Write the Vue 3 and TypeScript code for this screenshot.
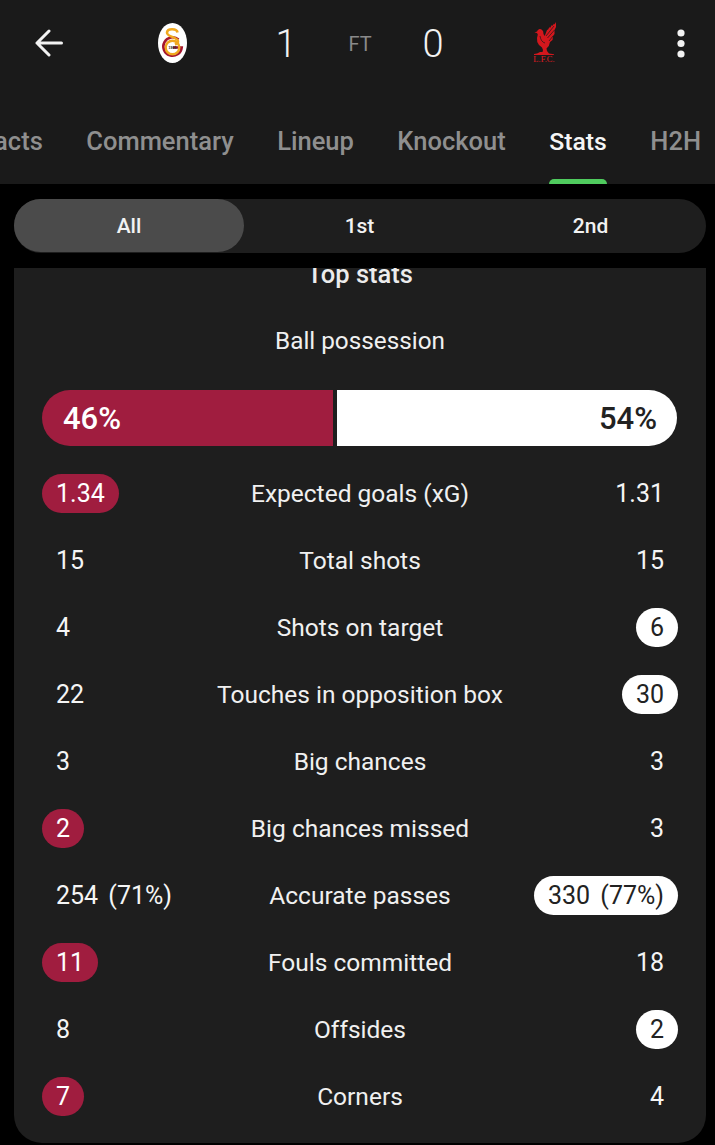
<script setup lang="ts">
interface Side { text: string; win?: boolean }
interface Row { label: string; left: Side; right: Side }

const tabs: string[] = ['Facts', 'Commentary', 'Lineup', 'Knockout', 'Stats', 'H2H']
const periods: string[] = ['All', '1st', '2nd']
const rows: Row[] = [
  { label: 'Expected goals (xG)', left: { text: '1.34', win: true }, right: { text: '1.31' } },
  { label: 'Total shots', left: { text: '15' }, right: { text: '15' } },
  { label: 'Shots on target', left: { text: '4' }, right: { text: '6', win: true } },
  { label: 'Touches in opposition box', left: { text: '22' }, right: { text: '30', win: true } },
  { label: 'Big chances', left: { text: '3' }, right: { text: '3' } },
  { label: 'Big chances missed', left: { text: '2', win: true }, right: { text: '3' } },
  { label: 'Accurate passes', left: { text: '254 (71%)' }, right: { text: '330 (77%)', win: true } },
  { label: 'Fouls committed', left: { text: '11', win: true }, right: { text: '18' } },
  { label: 'Offsides', left: { text: '8' }, right: { text: '2', win: true } },
  { label: 'Corners', left: { text: '7', win: true }, right: { text: '4' } },
]
</script>

<template>
  <div class="page">
    <header class="header">
      <div class="match">
        <svg class="back" viewBox="0 0 28 28" width="28" height="28" fill="none" stroke="#f2f2f2" stroke-width="3" stroke-linecap="round" stroke-linejoin="round">
          <path d="M2 14H26.500M14 2 2 14l12 12" />
        </svg>
        <svg class="crest" viewBox="0 0 29 40" width="29" height="40">
          <ellipse cx="14.500" cy="20" rx="14.500" ry="20" fill="#fff" />
          <path d="M20.500 16.500A9.200 9.200 0 1 0 23.700 24.500H15" fill="none" stroke="#a5172f" stroke-width="2.600" />
          <circle cx="14.500" cy="24.500" r="6.800" fill="none" stroke="#f0a81e" stroke-width="2.400" />
          <path d="M19.500 9.500C19 5.500 9.500 5 9 9.500 8.500 14 19 13.500 20 18c.5 2.500-2 3-3 3.500" fill="none" stroke="#f0a81e" stroke-width="2.600" />
          <text x="14.500" y="25.700" text-anchor="middle" class="founded">1905</text>
        </svg>
        <span class="score">1</span>
        <span class="status">FT</span>
        <span class="score">0</span>
        <svg class="crest" viewBox="0 0 24 42" width="24" height="42">
          <path fill="#d3171d" d="M23 0 21.500 2.500 21 1.500 19.500 4 19 2.800 17 6 16.500 5 14.800 8 14.200 7.500 12.500 12 11.500 14 10.500 12 10.200 9.500Q9 6.500 6.500 7 4.500 7.500 4 9.500L1.500 10.500 4 11 4.800 12.500 4 16Q3.500 20 6 23L9 25.500 10 28 9.500 30 7 30 4 31.500 1 32V33H21V32.200L16 31.500 14 29 13.500 26.500Q16.500 24 17 20L19.500 18 20 14 21.500 12 21.500 8 23 5Z" />
          <path d="M13 14 21 4M14.500 16 21.500 8M16 19 20 14M7 14Q8 20 12 21" fill="none" stroke="#1a1a1a" stroke-width=".7" />
          <text x="11" y="40" text-anchor="middle" class="lfc">L.F.C.</text>
        </svg>
        <svg class="menu" viewBox="0 0 8 29" width="8" height="29" fill="#f2f2f2">
          <circle cx="4" cy="4" r="3.600" />
          <circle cx="4" cy="14.500" r="3.600" />
          <circle cx="4" cy="25" r="3.600" />
        </svg>
      </div>
      <nav class="tabs">
        <span v-for="tab in tabs" :key="tab" class="tab" :class="{ active: tab === 'Stats' }">{{ tab }}</span>
      </nav>
    </header>

    <main class="content">
      <div class="periods">
        <span v-for="(p, i) in periods" :key="p" class="period" :class="{ active: i === 0 }">{{ p }}</span>
      </div>

      <section class="card">
        <h2 class="title">Top stats</h2>
        <p class="possession-label">Ball possession</p>
        <div class="bar">
          <div class="home">46%</div>
          <div class="away">54%</div>
        </div>
        <div class="rows">
          <div v-for="row in rows" :key="row.label" class="row">
            <div class="cell left"><span class="val" :class="{ 'win-home': row.left.win }">{{ row.left.text }}</span></div>
            <div class="label">{{ row.label }}</div>
            <div class="cell right"><span class="val" :class="{ 'win-away': row.right.win }">{{ row.right.text }}</span></div>
          </div>
        </div>
      </section>
    </main>
  </div>
</template>

<style>
html, body { margin: 0; background: #000; }
</style>

<style scoped>
.page {
  width: 715px;
  height: 1145px;
  overflow: hidden;
  background: #000;
  font-family: Roboto, "Liberation Sans", sans-serif;
  color: #f2f2f2;
}
.header {
  height: 184px;
  background: #1a1a1a;
  overflow: hidden;
}
.match {
  height: 86px;
  display: grid;
  grid-template-columns: 98px 148px 78px 72px 72px 154px 93px;
  align-items: center;
  justify-items: center;
}
.menu { justify-self: end; margin-right: 30px; }
.score { font-size: 38px; font-weight: 300; color: #f2f2f2; padding: 2px 0 0 2px; }
.status { font-size: 20px; color: #8a8a8a; padding-top: 2px; }
.founded { font: 700 3.500px "Liberation Sans", sans-serif; fill: #222; }
.lfc { font: 8.500px "Liberation Serif", serif; fill: #e01b22; }
.tabs {
  height: 98px;
  display: flex;
  gap: 43.500px;
  margin-left: -19.500px;
}
.tab {
  position: relative;
  flex: none;
  line-height: 111px;
  font-size: 25.500px;
  font-weight: 500;
  color: #8f8f8f;
  white-space: nowrap;
}
.tab.active { color: #f5f5f5; font-size: 24.800px; }
.tab.active::after {
  content: "";
  position: absolute;
  left: 0;
  right: 0;
  bottom: 0;
  height: 5px;
  border-radius: 5px 5px 0 0;
  background: #4fcb5e;
}
.content { padding: 15px 9px 0 14px; }
.periods {
  height: 54px;
  display: grid;
  grid-template-columns: 230px 1fr 1fr;
  background: #1e1e1e;
  border-radius: 27px;
}
.period {
  display: flex;
  align-items: center;
  justify-content: center;
  font-size: 21px;
  font-weight: 500;
  color: #f2f2f2;
  border-radius: 27px;
}
.period.active { background: #4b4b4b; height: 53px; }
.card {
  margin-top: 15px;
  height: 875px;
  overflow: hidden;
  background: #1e1e1e;
  border-radius: 0 0 28px 28px;
  padding: 0 28px;
}
.title {
  margin: -9px 0 0;
  height: 30px;
  line-height: 30px;
  text-align: center;
  font-size: 25.500px;
  font-weight: 500;
  color: #ececec;
}
.possession-label {
  margin: 37px 0 0;
  height: 30px;
  line-height: 30px;
  text-align: center;
  font-size: 24.300px;
  color: #f0f0f0;
}
.bar {
  margin: 34px 1px 0 0;
  height: 56px;
  display: flex;
  gap: 4px;
  font-size: 31px;
  font-weight: 500;
}
.home, .away {
  display: flex;
  align-items: center;
  padding: 0 20px 0 21px;
  box-sizing: border-box;
}
.home {
  width: 291px;
  background: #a01d3f;
  color: #fff;
  border-radius: 28px 0 0 28px;
}
.away {
  flex: 1;
  justify-content: flex-end;
  background: #fff;
  color: #222;
  border-radius: 0 28px 28px 0;
}
.rows { margin-top: 14px; }
.row {
  height: 67px;
  display: grid;
  grid-template-columns: 1fr auto 1fr;
  align-items: center;
  font-size: 25px;
}
.label { text-align: center; color: #f0f0f0; font-size: 24.500px; }
.cell { display: flex; }
.right { justify-content: flex-end; }
.val {
  min-width: 14px;
  height: 39px;
  line-height: 39px;
  padding: 0 14px;
  border-radius: 20px;
  text-align: center;
  color: #f5f5f5;
  white-space: nowrap;
  font-kerning: none;
  word-spacing: 4px;
}
.win-home { background: #a01d3f; color: #fff; }
.win-away { background: #fff; color: #222; }
</style>
